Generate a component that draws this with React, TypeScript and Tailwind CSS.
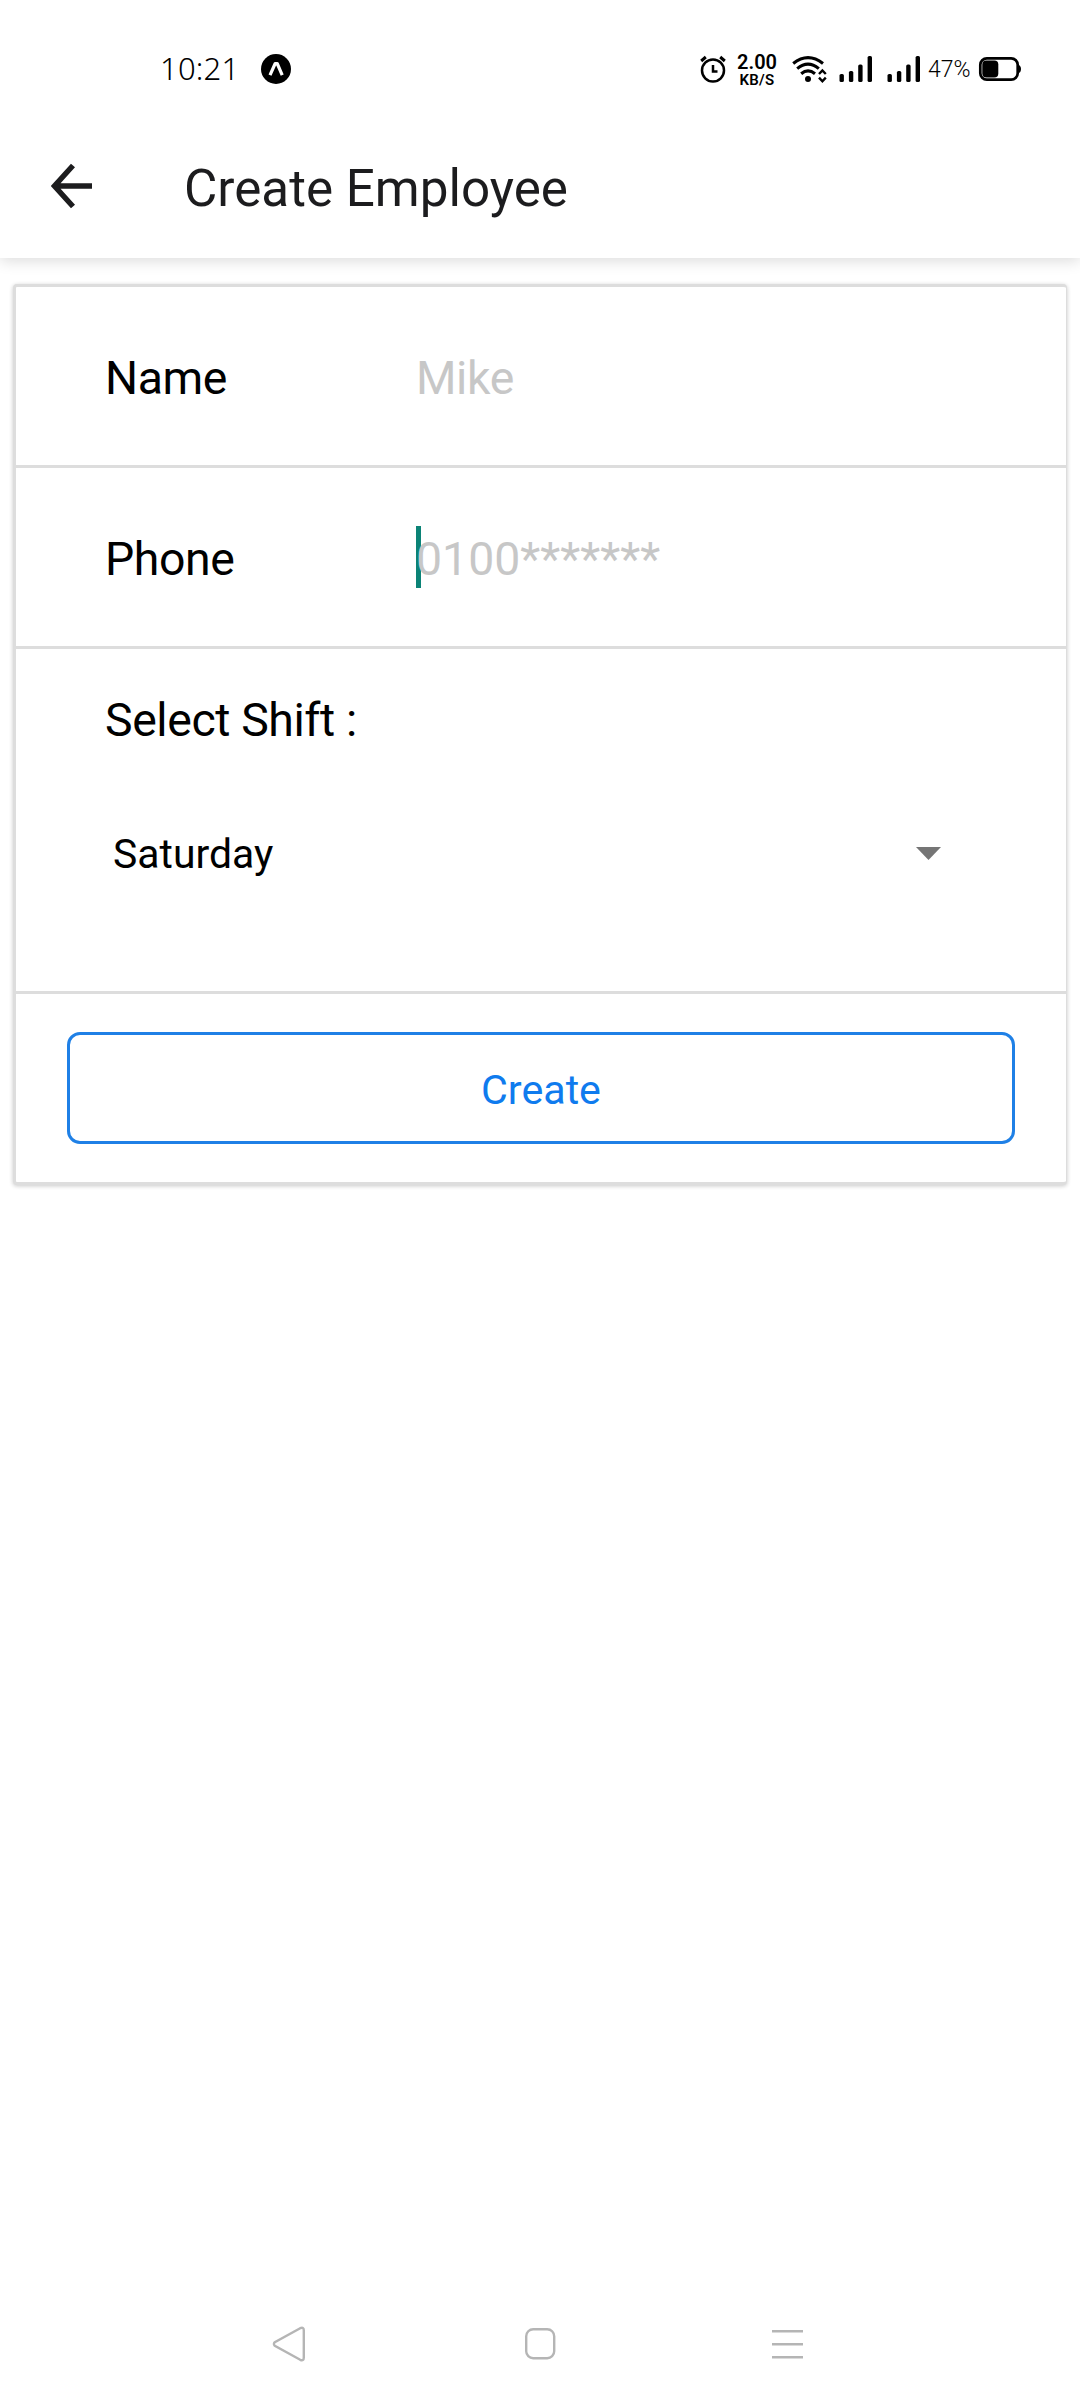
import React from "react";

function StatusBar() {
  return (
    <div className="relative z-10 flex h-[118px] items-center bg-white pt-5 pr-[58px] pl-[160px] text-black">
      <span className="w-[100px] pb-[2px] font-['Noto_Sans'] text-[31px] leading-none font-[350] tracking-[0.2px] whitespace-nowrap">10:21</span>
      <svg className="ml-[1px]" width="30" height="30" viewBox="0 0 30 30">
        <circle cx="15" cy="15" r="15" fill="#000" />
        <path d="M9 21.2 14.2 9.5h2l5 11.7" fill="none" stroke="#fff" strokeWidth="3.2" strokeLinejoin="round" />
      </svg>
      <div className="flex-1" />
      <svg width="26" height="28" viewBox="0 0 26 28" fill="none" stroke="#000" strokeWidth="2.5">
        <circle cx="13" cy="15.5" r="11" />
        <path d="M13 10v6.5h4.5" />
        <path d="M1.2 6 5.8 2M24.8 6 20.2 2" strokeWidth="3" />
      </svg>
      <div className="ml-[11px] flex h-[35px] w-[40px] flex-col items-center justify-between font-['Roboto'] font-semibold">
        <span className="text-[20px] leading-[20px] whitespace-nowrap">2.00</span>
        <span className="text-[15px] leading-[14px] tracking-[0.3px] whitespace-nowrap">KB/S</span>
      </div>
      <svg className="ml-[15px]" width="35" height="28" viewBox="0 0 35 28" fill="none" stroke="#000" strokeWidth="3.1">
        <path d="M1.2 8.5Q16 -3.2 31 8.5M5.2 13.6Q16 4.6 26.8 13.6M9.2 18.8Q16 13 23 18.8" />
        <circle cx="16" cy="24" r="3" fill="#000" stroke="none" />
        <path d="m27 19 3.4-3.6 3.4 3.6M27 22.6l3.4 3.6 3.4-3.6" strokeWidth="2.4" />
      </svg>
      <Signal className="ml-[12px]" />
      <Signal className="ml-[14px]" />
      <span className="ml-[7px] w-[44px] font-['Roboto'] text-[23px] leading-none font-[350] whitespace-nowrap">47%</span>
      <svg className="ml-[6px]" width="44" height="26" viewBox="0 0 44 26">
        <rect x="2.3" y="2.3" width="37.4" height="21.4" rx="6.5" fill="none" stroke="#000" strokeWidth="2.7" />
        <rect x="4.3" y="4.5" width="16" height="17" rx="4" />
        <path d="M40 8.5q3 1 3 4.5t-3 4.5z" />
      </svg>
    </div>
  );
}

function Signal({ className }: { className: string }) {
  return (
    <svg className={className} width="34" height="28" viewBox="0 0 34 28">
      <rect x="0.5" y="19" width="4.4" height="8" rx="1.6" />
      <rect x="9.9" y="16" width="4.4" height="11" rx="1.6" />
      <rect x="19.2" y="9.5" width="4.4" height="17.5" rx="1.6" />
      <rect x="28.6" y="1" width="4.4" height="26" rx="1.6" />
    </svg>
  );
}

function Header() {
  return (
    <header className="flex h-[140px] items-center bg-white pl-[51px] shadow-[0_3px_14px_rgba(0,0,0,0.14)]">
      <svg className="mb-[4px]" width="41" height="46" viewBox="0 0 41 46" fill="none" stroke="#1c1c1e" strokeWidth="5.4">
        <path d="M41 23H4M22 2.5 3.5 23 22 43.5" />
      </svg>
      <h1 className="ml-[92px] pt-[1px] text-[51.2px] leading-[60px] text-[#1c1c1e]">Create Employee</h1>
    </header>
  );
}

function Field({ label, children }: { label: string; children: React.ReactNode }) {
  return (
    <div className="flex h-[181px] items-center border-b-[3px] border-[#ddd] pl-[89px] text-[46.4px]">
      <span className="w-[311px] pt-[5px] tracking-[-0.4px]">{label}</span>
      {children}
    </div>
  );
}

export default function App() {
  return (
    <div className="flex h-[2400px] w-[1080px] flex-col overflow-hidden bg-white font-['Roboto',sans-serif] text-black">
      <StatusBar />
      <Header />
      <main className="flex-1 pt-[26px] pl-[13px]">
        <section className="w-[1054px] rounded-[4px] border-[3px] border-r border-[#ddd] bg-white shadow-[0_1px_4px_rgba(0,0,0,0.22)]">
          <Field label="Name">
            <span className="pt-[5px] tracking-[-0.4px] text-[#c7c7c7]">Mike</span>
          </Field>
          <Field label="Phone">
            <span className="relative flex h-[62px] items-center text-[#c7c7c7]">
              <span className="absolute top-0 left-0 h-[62px] w-[5px] bg-[#0b8376]" />
              <span className="relative pt-[5px]">0100*******</span>
            </span>
          </Field>
          <div className="h-[345px] border-b-[3px] border-[#ddd] pt-[41px] pl-[89px]">
            <p className="text-[46.4px] leading-[60px] tracking-[-0.4px]">Select Shift :</p>
            <div className="mt-[74px] flex items-center justify-between pr-[125px] pl-[8px]">
              <span className="text-[40.9px] leading-[60px]">Saturday</span>
              <svg className="mb-[1px]" width="25" height="13" viewBox="0 0 25 13">
                <path d="M0 0h25L12.5 13z" fill="#757575" />
              </svg>
            </div>
          </div>
          <div className="h-[188px] px-[51px] pt-[38px]">
            <button className="flex h-[112px] w-full items-center justify-center rounded-[13px] border-[3px] border-[#1f80e6] pt-[5px] text-[41.2px] text-[#0f7bee]">
              Create
            </button>
          </div>
        </section>
      </main>
      <nav className="flex h-[112px] items-center pl-[272px]">
        <svg width="34" height="36" viewBox="0 0 34 36" fill="none" stroke="#b5b5b5" strokeWidth="2.4">
          <path d="M28.2 2.2 2.8 16.2Q1 18 2.8 19.8L28.2 33.8Q31.8 35.5 31.8 31.5V4.5Q31.8 .5 28.2 2.2Z" />
        </svg>
        <svg className="ml-[218px]" width="32" height="36" viewBox="0 0 32 36" fill="none" stroke="#b5b5b5" strokeWidth="2.4">
          <rect x="2.2" y="3.2" width="28" height="29" rx="7" />
        </svg>
        <svg className="ml-[216px]" width="31" height="36" viewBox="0 0 31 36" fill="none" stroke="#b5b5b5" strokeWidth="2.6">
          <path d="M0 5.3h31M0 18.3h31M0 31.3h31" />
        </svg>
      </nav>
    </div>
  );
}
